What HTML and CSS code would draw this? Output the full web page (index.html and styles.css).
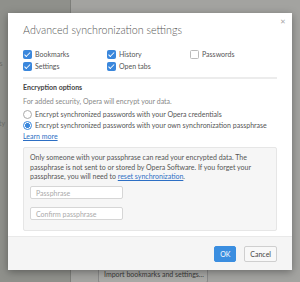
FILE: index.html
```html
<!DOCTYPE html>
<html>
<head>
<meta charset="utf-8">
<link rel="stylesheet" href="styles.css">
</head>
<body>
<div class="page">
  <div class="sidebar">
    <div class="side-item side-a">Settings</div>
    <div class="side-item side-b">Security</div>
  </div>
  <div class="main">
    <div class="bg-button">Import bookmarks and settings...</div>
  </div>
</div>

<div class="dialog">
  <div class="close">&#x2715;</div>
  <div class="body">
    <h1 class="title">Advanced synchronization settings</h1>
    <div class="checks">
      <label class="check"><span class="cb on"></span>Bookmarks</label>
      <label class="check"><span class="cb on"></span>History</label>
      <label class="check"><span class="cb"></span>Passwords</label>
      <label class="check"><span class="cb on"></span>Settings</label>
      <label class="check"><span class="cb on"></span>Open tabs</label>
    </div>
    <div class="sep"></div>
    <div class="section-title">Encryption options</div>
    <div class="muted">For added security, Opera will encrypt your data.</div>
    <label class="radio first"><span class="rb"></span>Encrypt synchronized passwords with your Opera credentials</label>
    <label class="radio"><span class="rb on"></span>Encrypt synchronized passwords with your own synchronization passphrase</label>
    <a class="link learn">Learn more</a>
    <div class="box">
      <p class="box-text">Only someone with your passphrase can read your encrypted data. The passphrase is not sent to or stored by Opera Software. If you forget your passphrase, you will need to <a class="link">reset synchronization</a>.</p>
      <div class="input">Passphrase</div>
      <div class="input second">Confirm passphrase</div>
    </div>
  </div>
  <div class="footer">
    <button class="btn primary">OK</button>
    <button class="btn">Cancel</button>
  </div>
</div>
</body>
</html>
```
FILE: styles.css
```css
html, body {
  margin: 0;
  padding: 0;
}
body {
  width: 300px;
  height: 282px;
  overflow: hidden;
  position: relative;
  font-family: "Lato", "Open Sans", "Liberation Sans", sans-serif;
  color: #555;
}
.page {
  display: flex;
  height: 282px;
}
.sidebar {
  width: 70px;
  background: #8f908b;
  border-right: 1px solid #7d7e7a;
  font-size: 7px;
  color: #6d6e69;
  overflow: hidden;
}
.side-a { margin-top: 59px; margin-left: -22px; }
.side-b { margin-top: 52px; margin-left: -20px; }
.main {
  flex: 1;
  background: #a3a3a0;
}
.bg-button {
  margin: 266px 0 0 27px;
  width: 110px;
  height: 17px;
  box-sizing: border-box;
  border: 1px solid #888;
  border-radius: 2px;
  background: #a9a9a6;
  font-size: 7px;
  color: #3a3a3a;
  padding: 3px 0 0 5px;
  white-space: nowrap;
}
.dialog {
  position: absolute;
  left: 8px;
  top: 13px;
  width: 284px;
  height: 257px;
  background: #fff;
  box-shadow: 0 2px 8px rgba(0,0,0,0.35);
  display: flex;
  flex-direction: column;
}
.close {
  position: absolute;
  right: 6px;
  top: 4px;
  font-size: 7px;
  color: #aaa;
}
.body {
  flex: 1;
  padding: 0 15px;
  font-size: 7px;
}
.title {
  margin: 9px 0 0;
  font-size: 10.7px;
  font-weight: 300;
  color: #555;
  line-height: 16px;
}
.checks {
  display: grid;
  grid-template-columns: 84px 83px auto;
  grid-auto-rows: 12px;
  margin-top: 10px;
}
.check, .radio {
  display: flex;
  align-items: center;
  gap: 3px;
  white-space: nowrap;
}
.cb {
  width: 7px;
  height: 7px;
  border: 1px solid #bbb;
  border-radius: 1.5px;
  background: #fff;
  position: relative;
  flex: none;
}
.cb.on {
  background: #3a87dc;
  border-color: #3a87dc;
}
.cb.on::after {
  content: "";
  position: absolute;
  left: 2.2px;
  top: 0.2px;
  width: 2px;
  height: 4.5px;
  border: solid #fff;
  border-width: 0 1.3px 1.3px 0;
  transform: rotate(45deg);
}
.sep {
  height: 2px;
  background: #ececec;
  margin-top: 5px;
}
.section-title {
  font-weight: 700;
  color: #444;
  margin-top: 2px;
  line-height: 12px;
}
.muted {
  color: #888;
  line-height: 12px;
  margin-top: 2px;
}
.radio {
  height: 11px;
}
.radio.first {
  margin-top: 1.5px;
}
.rb {
  width: 7px;
  height: 7px;
  border: 1px solid #aaa;
  border-radius: 50%;
  background: #fff;
  flex: none;
}
.rb.on {
  border-color: #3a87dc;
  background: radial-gradient(circle, #3a87dc 0 2.2px, #fff 2.6px);
}
.link {
  color: #2d6fc4;
  text-decoration: underline;
}
.learn {
  display: block;
  line-height: 11px;
}
.box {
  margin-top: 5.5px;
  background: #f6f6f6;
  border: 1px solid #e6e6e6;
  border-radius: 2px;
  padding: 5px 6px 10px;
}
.box-text {
  margin: 0;
  line-height: 9.7px;
  color: #555;
}
.input {
  width: 93px;
  height: 13px;
  box-sizing: border-box;
  border: 1px solid #d6d6d6;
  border-radius: 2px;
  background: #fff;
  color: #aaa;
  padding: 1px 5px 0;
  line-height: 11px;
  margin-top: 4px;
}
.input.second {
  margin-top: 8px;
}
.footer {
  height: 33px;
  background: #f5f5f5;
  border-top: 1px solid #e9e9e9;
  display: flex;
  justify-content: flex-end;
  align-items: center;
  gap: 8px;
  padding: 0 15px;
}
.btn {
  font-family: inherit;
  font-size: 7px;
  height: 16px;
  padding: 0 5px;
  border: 1px solid #cfcfcf;
  border-radius: 2px;
  background: #f8f8f8;
  color: #444;
  margin: 0;
}
.btn.primary {
  background: #3b8ee0;
  border-color: #3b8ee0;
  color: #fff;
  width: 22px;
  padding: 0;
}
```
